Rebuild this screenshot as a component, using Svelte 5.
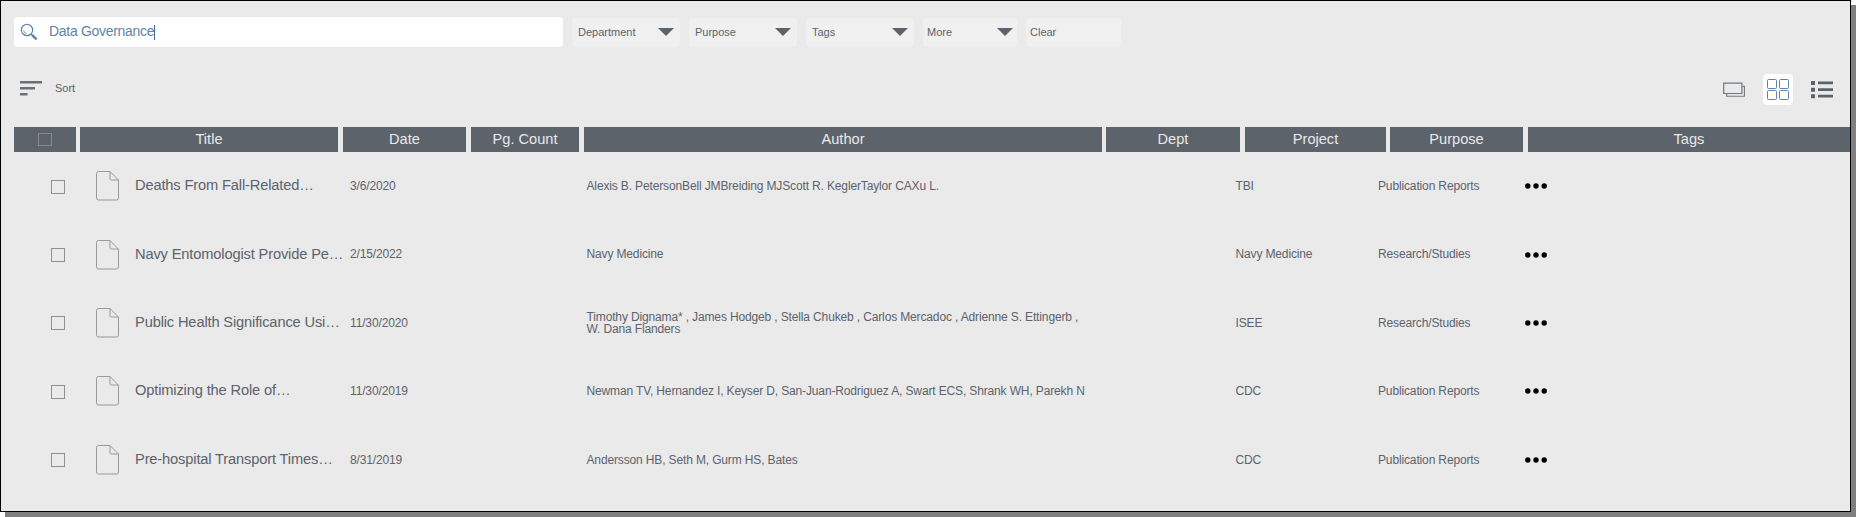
<script>
  const filters = [
    { label: 'Department', width: 108 },
    { label: 'Purpose', width: 108 },
    { label: 'Tags', width: 108 },
    { label: 'More', width: 94, tight: true },
    { label: 'Clear', width: 95, tight: true, plain: true }
  ];
  const headings = ['', 'Title', 'Date', 'Pg. Count', 'Author', 'Dept', 'Project', 'Purpose', 'Tags'];
  const rows = [
    { title: 'Deaths From Fall-Related…', date: '3/6/2020', author: ['Alexis B. PetersonBell JMBreiding MJScott R. KeglerTaylor CAXu L.'], project: 'TBI', purpose: 'Publication Reports' },
    { title: 'Navy Entomologist Provide Pe…', date: '2/15/2022', author: ['Navy Medicine'], project: 'Navy Medicine', purpose: 'Research/Studies' },
    { title: 'Public Health Significance Usi…', date: '11/30/2020', author: ['Timothy Dignama* , James Hodgeb , Stella Chukeb , Carlos Mercadoc , Adrienne S. Ettingerb ,', 'W. Dana Flanders'], project: 'ISEE', purpose: 'Research/Studies' },
    { title: 'Optimizing the Role of…', date: '11/30/2019', author: ['Newman TV, Hernandez I, Keyser D, San-Juan-Rodriguez A, Swart ECS, Shrank WH, Parekh N'], project: 'CDC', purpose: 'Publication Reports' },
    { title: 'Pre-hospital Transport Times…', date: '8/31/2019', author: ['Andersson HB, Seth M, Gurm HS, Bates'], project: 'CDC', purpose: 'Publication Reports' }
  ];
</script>

<div class="stage">
<main class="panel">
  <div class="filters">
    <div class="search">
      <svg width="18" height="18" viewBox="0 0 18 18" fill="none" stroke="#5f84a8">
        <circle cx="7" cy="7" r="5.7" stroke-width="1.2" />
        <path d="M3.6 7.2a3.5 3.5 0 0 0 3 3.3" stroke-width=".8" />
        <path d="M10.8 10.8l1.6 1.6" stroke-width="1.2" />
        <path d="M12 12l4.6 4.4" stroke-width="2.6" />
      </svg>
      <span class="query">Data Governance</span><span class="caret"></span>
    </div>
    {#each filters as f}
      <button class="filter" class:tight={f.tight} style="width: {f.width}px">
        <span>{f.label}</span>
        {#if !f.plain}
          <svg width="16" height="8" viewBox="0 0 16 8"><path d="M0 0h16L8 8z" fill="#5d636c" /></svg>
        {/if}
      </button>
    {/each}
  </div>

  <div class="toolbar">
    <svg width="22" height="15" viewBox="0 0 22 15" fill="#6b7078"><path d="M0 0h22v2.5H0zM0 6h15v2.6H0zM0 12h7.5v2.6H0z" /></svg>
    <span class="sort">Sort</span>
    <div class="views">
      <span class="view">
        <svg width="22" height="16" viewBox="0 0 22 16" fill="none" stroke="#73777d">
          <path d="M.7 1.2h18.2v10.3H.7z" stroke-width="1.2" />
          <path d="M3.6 12v2.3h17.8V4.4h-2" stroke-width="1.1" />
        </svg>
      </span>
      <span class="view active">
        <svg width="22" height="22" viewBox="0 0 22 22" fill="none" stroke="#5b83ab">
          <rect x=".5" y=".5" width="9" height="9" rx="1" />
          <rect x="12.5" y=".5" width="9" height="9" rx="1" />
          <rect x=".5" y="11.5" width="9" height="9" rx="1" />
          <rect x="12.5" y="11.5" width="9" height="9" rx="1" />
        </svg>
      </span>
      <span class="view">
        <svg width="22" height="18" viewBox="0 0 22 18" fill="#5d636c">
          <path d="M0 0h4v4H0zM0 6.7h4v4H0zM0 13.3h4v4H0zM7 .5h15v2.7H7zM7 7.2h15v2.7H7zM7 13.8h15v2.7H7z" />
        </svg>
      </span>
    </div>
  </div>

  <div class="head">
    {#each headings as h, i}
      <div class="cell">{#if i === 0}<span class="box dim"></span>{:else}{h}{/if}</div>
    {/each}
  </div>

  {#each rows as row}
    <div class="row">
      <span class="box"></span>
      <svg class="doc" width="24" height="30" viewBox="0 0 24 30" fill="none" stroke="#999">
        <path d="M14 .5H2.5Q.5 .5.5 2.5v24.3q0 2.2 2 2.2h18.3q1.7 0 1.7-2.2V9z" />
        <path d="M14 .5v7.3Q14 9 15.2 9h7.3" />
      </svg>
      <span class="title">{row.title}</span>
      <span>{row.date}</span>
      <span class="author">{#each row.author as line}<span>{line}</span>{/each}</span>
      <span>{row.project}</span>
      <span>{row.purpose}</span>
      <svg class="dots" width="22" height="6" viewBox="0 0 22 6"><circle cx="2.8" cy="3" r="2.7" /><circle cx="11" cy="3" r="2.7" /><circle cx="19.2" cy="3" r="2.7" /></svg>
    </div>
  {/each}
</main>
</div>

<style>
  :global(body) { background: #fff; }
  .stage { width: 1856px; height: 517px; overflow: hidden; }
  .panel {
    box-sizing: border-box;
    width: 1851px;
    height: 512px;
    border: 1px solid #000;
    background: #eaeaea;
    box-shadow: 5px 5px 0 #808080;
    font-family: "Liberation Sans", Arial, sans-serif;
    color: #5d636c;
  }
  svg { display: block; flex: none; }
  .filters { display: flex; align-items: flex-end; gap: 9px; padding: 16px 0 0 13px; }
  .search {
    display: flex; align-items: center; box-sizing: border-box;
    width: 549px; height: 30px; padding-left: 6px;
    background: #fff; border-radius: 4px; color: #5f84a8;
  }
  .query { margin-left: 11px; font-size: 14px; letter-spacing: -.3px; line-height: 18px; padding-bottom: 2px; }
  .caret { width: 1px; height: 15px; background: #3f6d9a; }
  .filter {
    display: flex; align-items: center; justify-content: space-between; box-sizing: border-box;
    height: 29px; padding: 0 6px; border: 0; border-radius: 4px;
    background: #f0f0f0; color: inherit; font: 11px "Liberation Sans", Arial, sans-serif;
  }
  .filter span { padding-bottom: 2px; }
  .filter svg { margin-bottom: 1px; }
  .filter.tight { padding: 0 4px; }
  .toolbar { display: flex; align-items: center; height: 31px; margin-top: 26px; padding: 0 13px 0 19px; }
  .sort { margin-left: 13px; font-size: 11px; padding-bottom: 1px; }
  .views { display: flex; margin-left: auto; gap: 14px; margin-top: 1px; position: relative; top: .5px; }
  .view { display: flex; align-items: center; justify-content: center; width: 30px; height: 31px; border-radius: 4px; }
  .active { background: #fff; }
  .head {
    display: grid; height: 25px; margin: 23px 0 0 13px;
    grid-template-columns: 66px 263px 128px 113px 522px 139px 145px 138px 322px;
  }
  .cell {
    display: flex; align-items: center; justify-content: center;
    margin-right: 5px; padding-bottom: 1px; height: 24px;
    background: #5d636b; color: #e9e9e9; font-size: 14.6px;
  }
  .cell:nth-child(1), .cell:nth-child(5), .cell:nth-child(7) { margin-right: 4px; }
  .cell:last-child { margin-right: 0; }
  .box { box-sizing: border-box; width: 14px; height: 14px; border: 1px solid #8e9093; }
  .dim { height: 13px; margin-left: -1px; margin-top: 1px; border-color: #858a90; }
  .row {
    display: grid; align-items: center; height: 68.4px; padding-left: 50px;
    font-size: 12px; letter-spacing: -.14px; line-height: 12px;
    grid-template-columns: 45px 39px 215px 236.5px 649px 142.5px 147px 30px;
    white-space: nowrap;
  }
  .row > .box { margin-top: 1px; }
  .row > span:not(.box) { margin-top: -.4px; }
  .row > .title { font-size: 14.67px; letter-spacing: -.15px; line-height: 15.5px; height: 15.5px; overflow: hidden; margin-top: .6px; }
  .author { display: flex; flex-direction: column; }
</style>
